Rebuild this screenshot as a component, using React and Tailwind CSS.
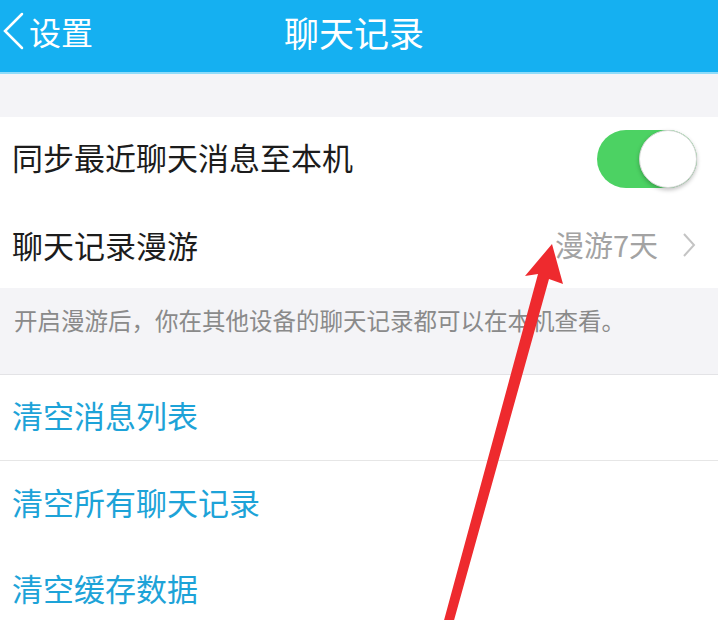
import React from 'react';

const FONT = { fontFamily: '"Noto Sans CJK SC", "Noto Sans", sans-serif' };

function Toggle() {
  return (
    <div className="relative w-[100px] h-[58px] rounded-full bg-[#4cd263]">
      <div className="absolute right-0 top-0 w-[58px] h-[58px] rounded-full bg-white border border-[#d7d7d7] shadow-[0_2px_4px_rgba(0,0,0,0.25)]" />
    </div>
  );
}

function RedArrow() {
  // overlay annotation drawn on top of the screenshot
  return (
    <svg className="absolute left-0 top-0 pointer-events-none" width="718" height="620" viewBox="0 0 718 620">
      <polygon
        points="443,624 453,624 549,279 563,284 552,244 525,276 538,274"
        fill="#ee2a2e"
      />
    </svg>
  );
}

export default function App() {
  const actions = ['清空消息列表', '清空所有聊天记录', '清空缓存数据'];

  return (
    <div className="relative w-[718px] h-[620px] overflow-hidden bg-[#f4f4f7]" style={FONT}>
      {/* 顶部导航 */}
      <div className="h-[74px] bg-[#15b0f1] border-b-2 border-[#8fdcfa] flex items-center pb-[10px] relative">
        <div className="flex items-center text-white text-[32px] leading-none">
          <svg width="26" height="40" viewBox="0 0 26 40" className="ml-[1px] mr-[2px]">
            <path d="M21 3 L4 20 L21 37" fill="none" stroke="#ffffff" strokeWidth="2.5" strokeLinecap="round" />
          </svg>
          <span>设置</span>
        </div>
        <div className="absolute inset-x-0 top-0 h-[62px] flex items-center justify-center pointer-events-none">
          <span className="text-white text-[35px] leading-none mr-[10px]">聊天记录</span>
        </div>
      </div>

      <div className="h-[43px]" />

      {/* 同步 / 漫游 */}
      <div className="bg-white">
        <div className="h-[84px] flex items-center justify-between pl-[12px] pr-[21px]">
          <span className="text-[31px] text-[#1c1c1c] leading-none mb-[6px]">同步最近聊天消息至本机</span>
          <Toggle />
        </div>
        <div className="h-[87px] flex items-center justify-between pl-[12px] pr-[22px]">
          <span className="text-[31px] text-[#1c1c1c] leading-none">聊天记录漫游</span>
          <div className="flex items-center gap-[24px]">
            <span className="text-[29px] text-[#a3a3a3] leading-none">漫游7天</span>
            <svg width="14" height="26" viewBox="0 0 14 26">
              <path d="M2 2 L12 13 L2 24" fill="none" stroke="#c4c4c4" strokeWidth="2" />
            </svg>
          </div>
        </div>
      </div>

      {/* 说明 */}
      <div className="h-[87px] border-b border-[#e3e3e6] pl-[14px] pt-[21px]">
        <span className="text-[23.5px] text-[#8a8a8a] leading-none">开启漫游后，你在其他设备的聊天记录都可以在本机查看。</span>
      </div>

      {/* 清空操作 */}
      <div className="bg-white">
        {actions.map((a, i) => (
          <div
            key={a}
            className={`h-[86px] flex items-center pl-[12px] ${i === 0 ? 'border-b border-[#e6e6e6]' : ''}`}
          >
            <span className="text-[31px] text-[#1da3d8] leading-none mb-[6px]">{a}</span>
          </div>
        ))}
      </div>

      <RedArrow />
    </div>
  );
}
